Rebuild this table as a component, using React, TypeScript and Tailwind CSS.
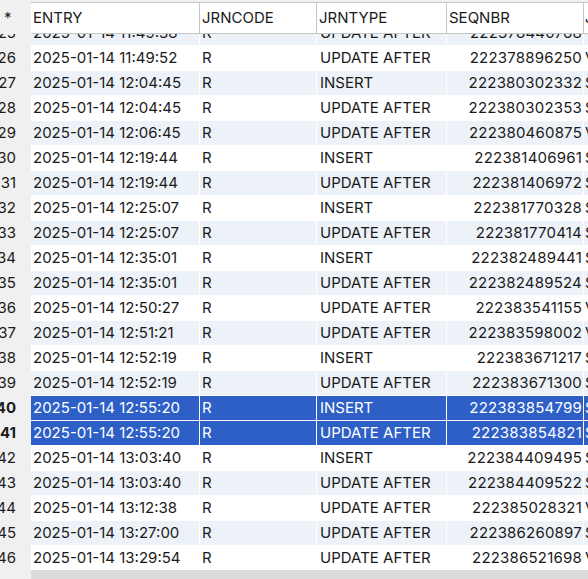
import React from 'react';

// Rows from the journal view (row 25 is mostly hidden under the header)
interface JournalRow {
  nr: number;
  entry: string;
  code: string;
  type: string;
  seq: string;
  next: string;
}

const rows: JournalRow[] = [
  { nr: 25, entry: '2025-01-14 11:49:38', code: 'R', type: 'UPDATE AFTER', seq: '222378440768', next: 'VA' },
  { nr: 26, entry: '2025-01-14 11:49:52', code: 'R', type: 'UPDATE AFTER', seq: '222378896250', next: 'VA' },
  { nr: 27, entry: '2025-01-14 12:04:45', code: 'R', type: 'INSERT', seq: '222380302332', next: 'ST' },
  { nr: 28, entry: '2025-01-14 12:04:45', code: 'R', type: 'UPDATE AFTER', seq: '222380302353', next: 'ST' },
  { nr: 29, entry: '2025-01-14 12:06:45', code: 'R', type: 'UPDATE AFTER', seq: '222380460875', next: 'VA' },
  { nr: 30, entry: '2025-01-14 12:19:44', code: 'R', type: 'INSERT', seq: '222381406961', next: 'ST' },
  { nr: 31, entry: '2025-01-14 12:19:44', code: 'R', type: 'UPDATE AFTER', seq: '222381406972', next: 'ST' },
  { nr: 32, entry: '2025-01-14 12:25:07', code: 'R', type: 'INSERT', seq: '222381770328', next: 'ST' },
  { nr: 33, entry: '2025-01-14 12:25:07', code: 'R', type: 'UPDATE AFTER', seq: '222381770414', next: 'ST' },
  { nr: 34, entry: '2025-01-14 12:35:01', code: 'R', type: 'INSERT', seq: '222382489441', next: 'ST' },
  { nr: 35, entry: '2025-01-14 12:35:01', code: 'R', type: 'UPDATE AFTER', seq: '222382489524', next: 'ST' },
  { nr: 36, entry: '2025-01-14 12:50:27', code: 'R', type: 'UPDATE AFTER', seq: '222383541155', next: 'VA' },
  { nr: 37, entry: '2025-01-14 12:51:21', code: 'R', type: 'UPDATE AFTER', seq: '222383598002', next: 'VA' },
  { nr: 38, entry: '2025-01-14 12:52:19', code: 'R', type: 'INSERT', seq: '222383671217', next: 'ST' },
  { nr: 39, entry: '2025-01-14 12:52:19', code: 'R', type: 'UPDATE AFTER', seq: '222383671300', next: 'ST' },
  { nr: 40, entry: '2025-01-14 12:55:20', code: 'R', type: 'INSERT', seq: '222383854799', next: 'ST' },
  { nr: 41, entry: '2025-01-14 12:55:20', code: 'R', type: 'UPDATE AFTER', seq: '222383854821', next: 'ST' },
  { nr: 42, entry: '2025-01-14 13:03:40', code: 'R', type: 'INSERT', seq: '222384409495', next: 'ST' },
  { nr: 43, entry: '2025-01-14 13:03:40', code: 'R', type: 'UPDATE AFTER', seq: '222384409522', next: 'ST' },
  { nr: 44, entry: '2025-01-14 13:12:38', code: 'R', type: 'UPDATE AFTER', seq: '222385028321', next: 'VA' },
  { nr: 45, entry: '2025-01-14 13:27:00', code: 'R', type: 'UPDATE AFTER', seq: '222386260897', next: 'ST' },
  { nr: 46, entry: '2025-01-14 13:29:54', code: 'R', type: 'UPDATE AFTER', seq: '222386521698', next: 'VA' },
];

const selected = [40, 41];

export default function App() {
  return (
    <div
      className="w-[588px] h-[579px] overflow-hidden bg-[#f0f0f0] text-[15px] text-[#1a1a1a] flex flex-col"
      style={{ fontFamily: 'Inter, "Noto Sans", sans-serif' }}
    >
      {/* header */}
      <div className="flex h-[34px] pt-[2px] shrink-0 relative z-10">
        <div className="w-[31px] shrink-0 pl-[4px] flex items-center">*</div>
        <div className="flex flex-1 bg-white border-y border-[#c6c6c6] h-[32px]">
          <div className="w-[169px] shrink-0 border-r border-[#c6c6c6] pl-[2px] flex items-center">ENTRY</div>
          <div className="w-[117px] shrink-0 border-r border-[#c6c6c6] pl-[2px] flex items-center">JRNCODE</div>
          <div className="w-[130px] shrink-0 border-r border-[#c6c6c6] pl-[2px] flex items-center">JRNTYPE</div>
          <div className="w-[137px] shrink-0 border-r border-[#c6c6c6] pl-[2px] flex items-center">SEQNBR</div>
          <div className="flex-1 pl-[1px] flex items-center whitespace-nowrap overflow-hidden">JOURNAL</div>
        </div>
      </div>

      {/* body */}
      <div className="flex-1 overflow-hidden">
        <div className="-mt-[13px]">
          {rows.map((r) => {
            const sel = selected.includes(r.nr);
            const bg = sel ? 'bg-[#2e5fc7] text-white' : r.nr % 2 === 1 ? 'bg-[#edf2f8]' : 'bg-white';
            return (
              <div key={r.nr} className="flex h-[25px]">
                <div className={`w-[31px] shrink-0 flex items-center justify-end pr-[15px] whitespace-nowrap ${sel ? 'font-bold' : ''}`}>
                  {r.nr}
                </div>
                <div className={`flex flex-1 border-b border-white ${bg}`}>
                  <div className="w-[169px] shrink-0 border-r border-white pl-[2px] flex items-center whitespace-nowrap">{r.entry}</div>
                  <div className="w-[117px] shrink-0 border-r border-white pl-[2px] flex items-center">{r.code}</div>
                  <div className="w-[130px] shrink-0 border-r border-white pl-[3px] flex items-center whitespace-nowrap">{r.type}</div>
                  <div className="w-[137px] shrink-0 border-r border-white pr-[1px] flex items-center justify-end tracking-[0.2px]">{r.seq}</div>
                  <div className="flex-1 pl-[1px] flex items-center whitespace-nowrap overflow-hidden">{r.next}</div>
                </div>
              </div>
            );
          })}
        </div>
      </div>

      {/* horizontal scrollbar track */}
      <div className="flex h-[9px] shrink-0">
        <div className="w-[31px] shrink-0" />
        <div className="flex-1 bg-[#dcdcdc]" />
      </div>
    </div>
  );
}
